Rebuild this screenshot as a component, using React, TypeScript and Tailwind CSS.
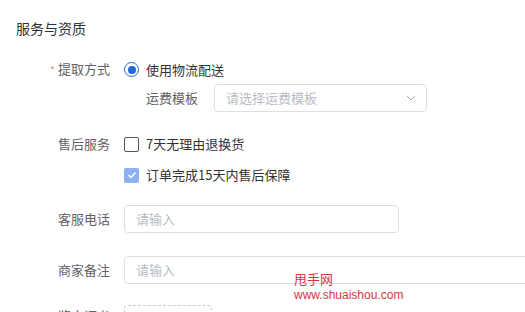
import React from "react";

const font = { fontFamily: '"Noto Sans CJK SC", "Noto Sans", sans-serif' };

function Label({ children, required }: { children: React.ReactNode; required?: boolean }) {
  return (
    <div className="w-[108px] shrink-0 pr-[14px] text-right text-[13px] leading-[20px] text-[#5f6266]">
      {required && <span className="mr-[3px] text-[10px] text-[#e4898c]">*</span>}
      {children}
    </div>
  );
}

export default function App() {
  return (
    <div className="relative h-[312px] w-[525px] overflow-hidden bg-white pl-[16px]" style={font}>
      <div className="pt-[18px] text-[14px] leading-[20px] text-[#303133]">服务与资质</div>

      <div className="mt-[21px] flex items-center">
        <Label required>提取方式</Label>
        <div className="flex items-center">
          <span className="flex h-[15px] w-[15px] items-center justify-center rounded-full border border-[#2468d8]">
            <span className="h-[8px] w-[8px] rounded-full bg-[#2468d8]" />
          </span>
          <span className="ml-[7px] text-[13px] leading-[20px] text-[#333]">使用物流配送</span>
        </div>
      </div>

      <div className="mt-[4px] flex items-center pl-[130px]">
        <span className="mr-[16px] text-[13px] leading-[20px] text-[#5f6266]">运费模板</span>
        <div className="flex h-[28px] w-[213px] items-center justify-between rounded-[4px] border border-[#dcdfe6] pl-[11px] pr-[10px]">
          <span className="text-[13px] text-[#b8bcc4]">请选择运费模板</span>
          <svg width="10" height="6" viewBox="0 0 10 6" fill="none">
            <path d="M1 1l4 4 4-4" stroke="#a8abb2" strokeWidth="1" />
          </svg>
        </div>
      </div>

      <div className="mt-[22px] flex items-center">
        <Label>售后服务</Label>
        <div className="flex items-center">
          <span className="h-[15px] w-[15px] rounded-[2px] border border-[#4d5866]" />
          <span className="ml-[7px] text-[13px] leading-[20px] text-[#333]">7天无理由退换货</span>
        </div>
      </div>

      <div className="mt-[11px] flex items-center pl-[108px]">
        <span className="flex h-[15px] w-[15px] items-center justify-center rounded-[2px] bg-[#8db0f0]">
          <svg width="10" height="8" viewBox="0 0 10 8" fill="none">
            <path d="M1.5 4l2.5 2.5L8.5 1.5" stroke="#fff" strokeWidth="1.5" />
          </svg>
        </span>
        <span className="ml-[7px] text-[13px] leading-[20px] text-[#333]">订单完成15天内售后保障</span>
      </div>

      <div className="mt-[20px] flex items-center">
        <Label>客服电话</Label>
        <div className="flex h-[28px] w-[275px] items-center rounded-[4px] border border-[#dcdfe6] pl-[11px]">
          <span className="text-[13px] text-[#b8bcc4]">请输入</span>
        </div>
      </div>

      <div className="mt-[23px] flex items-center">
        <Label>商家备注</Label>
        <div className="flex h-[28px] w-[440px] shrink-0 items-center rounded-[4px] border border-[#dcdfe6] pl-[11px]">
          <span className="text-[13px] text-[#b8bcc4]">请输入</span>
        </div>
      </div>

      <div className="mt-[21px] flex items-start">
        <div className="pt-[1px]">
          <Label>鉴定证书</Label>
        </div>
        <div className="h-[80px] w-[88px] rounded-[4px] border border-dashed border-[#c8cbd2]" />
      </div>

      <div className="absolute left-[294px] top-[271px] text-[#d8343e]">
        <div className="text-[13px] leading-[16px]">甩手网</div>
        <div className="text-[12px] leading-[16px]" style={{ fontFamily: '"Liberation Sans", Arial, sans-serif' }}>
          www.shuaishou.com
        </div>
      </div>
    </div>
  );
}
